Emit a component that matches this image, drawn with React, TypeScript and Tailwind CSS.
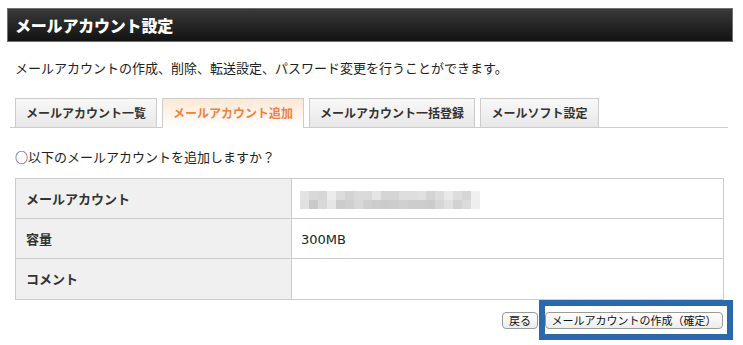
import React from "react";

const topRow = [
  "bg-[#e3e3e3]", "bg-[#d9d9d9]", "bg-[#d6d6d6]", "bg-[#ececec]", "bg-[#dcdcdc]",
  "bg-[#d3d3d3]", "bg-[#dadada]", "bg-[#dadada]", "bg-[#e5e5e5]", "bg-[#d5d5d5]",
  "bg-[#d5d5d5]", "bg-[#dedede]", "bg-[#dedede]", "bg-[#e0e0e0]", "bg-[#d4d4d4]",
  "bg-[#dcdcdc]", "bg-[#e9e9e9]", "bg-[#dcdcdc]", "bg-[#d6d6d6]", "bg-[#f0f0f0]",
];
const bottomRow = [
  "bg-[#e0e0e0]", "bg-[#c9c9c9]", "bg-[#d8d8d8]", "bg-[#e6e6e6]", "bg-[#cccccc]",
  "bg-[#cfcfcf]", "bg-[#d8d8d8]", "bg-[#cfcfcf]", "bg-[#cccccc]", "bg-[#cbcbcb]",
  "bg-[#cccccc]", "bg-[#d0d0d0]", "bg-[#cdcdcd]", "bg-[#cccccc]", "bg-[#cbcbcb]",
  "bg-[#d6d6d6]", "bg-[#e0e0e0]", "bg-[#d2d2d2]", "bg-[#dbdbdb]", "bg-[#eeeeee]",
];

function Blur() {
  return (
    <div className="flex flex-col">
      <div className="flex">
        {topRow.map((c, i) => (
          <div key={i} className={`w-[9px] h-[9px] ${c}`} />
        ))}
      </div>
      <div className="flex">
        {bottomRow.map((c, i) => (
          <div key={i} className={`w-[9px] h-[9px] ${c}`} />
        ))}
      </div>
    </div>
  );
}

const tabBase =
  "h-[29px] flex items-center justify-center border-t border-l border-r border-[#cccccc] text-[12px] font-bold leading-[16px]";

export default function App() {
  return (
    <div className="w-[743px] h-[345px] bg-white font-['Noto_Sans_CJK_JP',sans-serif] text-[#222]">
      <div className="pt-[8px] pl-[7px] w-[733px]">
        {/* Header */}
        <div className="h-[34px] w-[726px] border border-[#707070] bg-gradient-to-b from-[#3a3a3a] to-[#131313] flex items-center pl-[7px]">
          <span className="text-white font-black text-[16px] leading-[20px] tracking-[-0.2px]">
            メールアカウント設定
          </span>
        </div>

        {/* Description */}
        <p className="mt-[17px] pl-[8px] text-[13px] leading-[18px] text-[#222]">
          メールアカウントの作成、削除、転送設定、パスワード変更を行うことができます。
        </p>

        {/* Tabs */}
        <div className="mt-[21px] ml-[3px] w-[718px] border-b border-[#cccccc] flex items-end gap-[5px] pl-[5px]">
          <div className={`${tabBase} w-[142px] bg-gradient-to-b from-[#f8f8f8] to-[#e8e8e8] text-[#333]`}>
            メールアカウント一覧
          </div>
          <div className={`${tabBase} w-[142px] bg-gradient-to-b from-[#fde8d4] to-[#ffffff] text-[#f0813a] -mb-px h-[30px] pb-px`}>
            メールアカウント追加
          </div>
          <div className={`${tabBase} w-[166px] bg-gradient-to-b from-[#f8f8f8] to-[#e8e8e8] text-[#333]`}>
            メールアカウント一括登録
          </div>
          <div className={`${tabBase} w-[119px] bg-gradient-to-b from-[#f8f8f8] to-[#e8e8e8] text-[#333]`}>
            メールソフト設定
          </div>
        </div>

        {/* Question */}
        <p className="mt-[20px] pl-[8px] text-[13px] leading-[18px] text-[#222]">
          ○以下のメールアカウントを追加しますか？
        </p>

        {/* Table */}
        <div className="mt-[12px] ml-[8px] w-[709px] border border-[#cccccc]">
          <div className="flex h-[40px] border-b border-[#cccccc]">
            <div className="w-[276px] border-r border-[#cccccc] bg-[#f0f0f0] flex items-center pl-[10px] text-[13px] font-bold text-[#333]">
              メールアカウント
            </div>
            <div className="flex-1 flex items-center pl-[8px] pt-[2px]">
              <Blur />
            </div>
          </div>
          <div className="flex h-[40px] border-b border-[#cccccc]">
            <div className="w-[276px] border-r border-[#cccccc] bg-[#f0f0f0] flex items-center pl-[10px] text-[13px] font-bold text-[#333]">
              容量
            </div>
            <div className="flex-1 flex items-center pl-[9px] pt-[2px] text-[13px] text-[#222] font-['DejaVu_Sans',sans-serif]">
              300MB
            </div>
          </div>
          <div className="flex h-[40px]">
            <div className="w-[276px] border-r border-[#cccccc] bg-[#f0f0f0] flex items-center pl-[10px] text-[13px] font-bold text-[#333]">
              コメント
            </div>
            <div className="flex-1" />
          </div>
        </div>

        {/* Buttons */}
        <div className="w-[726px] flex justify-end items-center">
          <button className="h-[17px] w-[36px] mr-[1px] rounded-[4px] border border-[#9a9a9a] bg-gradient-to-b from-white to-[#ececec] text-[11px] leading-[15px] text-[#111] flex items-center justify-center">
            戻る
          </button>
          <div className="border-[6px] border-[#2c69ab] h-[40px] pr-[4px] flex items-center">
            <button className="h-[17px] w-[178px] rounded-[4px] border border-[#9a9a9a] bg-gradient-to-b from-white to-[#ececec] text-[11px] leading-[15px] text-[#111] flex items-center justify-center">
              メールアカウントの作成（確定）
            </button>
          </div>
        </div>
      </div>
    </div>
  );
}
